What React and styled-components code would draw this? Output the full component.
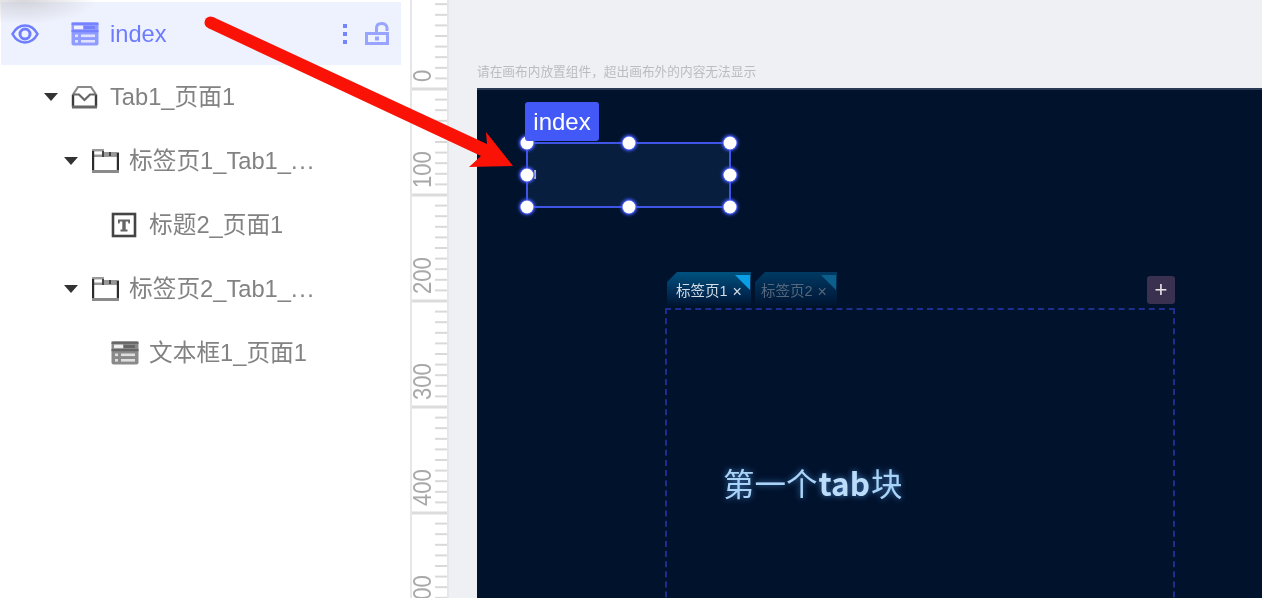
import React from 'react';
import styled, { createGlobalStyle } from 'styled-components';

const Global = createGlobalStyle`
  html, body { margin: 0; padding: 0; height: 100%; overflow: hidden; background: #fff; }
  #root { height: 100%; }
`;

const Page = styled.div`
  position: relative;
  display: flex;
  width: 1262px;
  height: 598px;
  overflow: hidden;
  filter: blur(0.5px);
  font-family: "Liberation Sans", "Noto Sans CJK SC", sans-serif;
`;

const Sidebar = styled.aside`
  position: relative;
  flex: 0 0 410px;
  box-sizing: border-box;
  padding-top: 2px;
  background: #fff;
  &::before {
    content: "";
    position: absolute;
    z-index: 1;
    left: 0; top: 0;
    width: 95px; height: 24px;
    background: radial-gradient(ellipse at 25% 0%, rgba(190,190,195,.6) 0%, rgba(230,230,235,0) 72%);
  }
`;

const Row = styled.div`
  position: relative;
  display: flex;
  align-items: center;
  box-sizing: border-box;
  height: ${p => (p.$active ? 63 : 64)}px;
  width: 400px;
  margin-left: 1px;
  padding-left: ${p => (p.$active ? 10 : 43 + p.$depth * 20)}px;
  background: ${p => (p.$active ? '#eef2fe' : 'transparent')};
  color: ${p => (p.$active ? '#6d7bff' : '#828282')};
  font-size: 23.7px;
`;

const CaretSlot = styled.span`
  flex: 0 0 27px;
  display: flex;
  align-items: center;
`;

const Caret = styled.i`
  width: 0; height: 0;
  border-left: 7px solid transparent;
  border-right: 7px solid transparent;
  border-top: 8px solid #333;
`;

const IconSlot = styled.span`
  flex: 0 0 ${p => p.$w || 28}px;
  display: flex;
  align-items: center;
  margin-right: ${p => p.$gap ?? 11}px;
`;

const RowLabel = styled.span`
  white-space: nowrap;
  line-height: 28px;
`;

const Ellipsis = styled.span`
  letter-spacing: 1.6px;
`;

const Actions = styled.div`
  margin-left: auto;
  display: flex;
  align-items: center;
  gap: 17px;
  padding-right: 12px;
`;

const Ruler = styled.svg`
  flex: 0 0 39px;
  display: block;
  background: #fff;
  border-left: 2px solid #e6e6e8;
  border-right: 2px solid #e6e6e8;
  box-sizing: border-box;
`;

const Workspace = styled.main`
  flex: 1;
  box-sizing: border-box;
  padding: 64px 0 0 28px;
  background: #eff0f4;
  overflow: hidden;
`;

const Hint = styled.div`
  height: 24px;
  line-height: 16px;
  font-size: 12.7px;
  color: #bbbbc0;
  white-space: nowrap;
`;

const Canvas = styled.div`
  position: relative;
  height: 510px;
  width: 800px;
  background: #00122c;
  border-top: 2px solid #2a3a55;
  box-sizing: border-box;
`;

const Selection = styled.div`
  position: absolute;
  left: 49px;
  top: 52px;
  width: 205px;
  height: 66px;
  box-sizing: border-box;
  background: #071e3e;
  border: 2px solid #3f55e6;
`;

const CursorMark = styled.i`
  position: absolute;
  left: 6px;
  top: 26px;
  width: 2px;
  height: 9px;
  background: #c8cfa8;
`;

const HandleLayer = styled.div`
  position: absolute;
  inset: -1px;
`;

const Handle = styled.span`
  position: absolute;
  left: ${p => p.$x}%;
  top: ${p => p.$y}%;
  width: 13px;
  height: 13px;
  border-radius: 50%;
  background: #fff;
  box-shadow: 0 0 0 1px #3f55e6, 0 0 3px 2px rgba(70, 90, 255, .75);
  transform: translate(-50%, -50%);
`;

const NameTag = styled.div`
  position: absolute;
  left: 48px;
  top: 12px;
  z-index: 2;
  width: 74px;
  height: 39px;
  border-radius: 3px;
  background: #4359f7;
  color: #fff;
  font-size: 24px;
  line-height: 39px;
  text-align: center;
`;

const TabGroup = styled.div`
  position: absolute;
  left: 188px;
  top: 182px;
  width: 510px;
`;

const TabBar = styled.div`
  display: flex;
  align-items: flex-start;
  gap: 4px;
  height: 36px;
  padding-left: 2px;
`;

const Tab = styled.div`
  position: relative;
  display: flex;
  align-items: flex-end;
  gap: 5px;
  box-sizing: border-box;
  width: ${p => (p.$active ? 84 : 82)}px;
  height: 34px;
  padding: 0 0 6px ${p => (p.$active ? 9 : 6)}px;
  clip-path: polygon(10px 0, 100% 0, 100% 100%, 0 100%, 0 10px);
  background: ${p => (p.$active
    ? 'linear-gradient(180deg, #00527f 0%, #00264f 70%, #00142f 100%)'
    : 'linear-gradient(180deg, #003a62 0%, #001f42 70%, #00142f 100%)')};
  color: ${p => (p.$active ? '#d5dde4' : '#56677c')};
  font-size: 14.5px;
  line-height: 17px;
  white-space: nowrap;
  &::after {
    content: "";
    position: absolute;
    right: 1px; top: 3px;
    border-left: 15px solid transparent;
    border-top: 15px solid ${p => (p.$active ? '#0a9fe6' : '#0a5f8c')};
  }
`;

const TabClose = styled.span`
  font-size: 16px;
`;

const AddButton = styled.div`
  margin: 4px 0 0 auto;
  width: 28px;
  height: 28px;
  border-radius: 3px;
  background: #3a3150;
  color: #e4e4e4;
  font-size: 22px;
  line-height: 27px;
  text-align: center;
`;

const Panel = styled.div`
  height: 320px;
  box-sizing: border-box;
  border: 2px dashed #1e2e8e;
  padding: 148px 0 0 56px;
`;

const PanelText = styled.div`
  color: #a9d3f7;
  font-family: "Noto Sans CJK SC", sans-serif;
  font-size: 31.5px;
  line-height: 48px;
  white-space: nowrap;
  text-shadow: 0 0 6px rgba(90, 160, 240, .7);
`;

const BoldWord = styled.span`
  font-weight: 700;
  margin: 0 1px;
  color: #bcdcfa;
`;

const ArrowOverlay = styled.svg`
  position: absolute;
  left: 0;
  top: 0;
  z-index: 5;
  pointer-events: none;
`;

const Eye = () => (
  <svg width="28" height="22" viewBox="0 0 28 22" fill="none" stroke="#6f7eff" strokeWidth="2.6">
    <path d="M1.5 11C5 4.5 9 2.5 14 2.5S23 4.5 26.5 11C23 17.5 19 19.5 14 19.5S5 17.5 1.5 11Z" />
    <circle cx="14" cy="11" r="5" strokeWidth="3" />
  </svg>
);

const InputIcon = ({ c, d }) => (
  <svg width="28" height="24" viewBox="0 0 28 24">
    <rect x="0.5" y="0.5" width="27" height="23" rx="2" fill={c} />
    <rect x="0.5" y="0.5" width="27" height="2.4" fill={d} />
    <rect x="3" y="3.6" width="9" height="3.6" fill="#fff" fillOpacity="0.85" />
    <rect x="13" y="4" width="11" height="3" fill={d} />
    <rect x="0.5" y="8" width="27" height="2.2" fill={d} />
    <g fill="#fff" fillOpacity="0.72">
      <rect x="4" y="12.5" width="3" height="2.6" />
      <rect x="10" y="12.5" width="14" height="2.6" />
      <rect x="4" y="18" width="3" height="2.6" />
      <rect x="10" y="18" width="14" height="2.6" />
    </g>
  </svg>
);

const InboxIcon = () => (
  <svg width="27" height="24" viewBox="0 0 27 24" fill="none">
    <path d="M2 9.5 7 2H20L25 9.5" stroke="#8a8a8a" strokeWidth="2.2" />
    <path d="M2 9.5V22M25 9.5V22" stroke="#3c3c3c" strokeWidth="2.4" />
    <path d="M2 9.5H8L13.5 15L19 9.5H25" stroke="#666" strokeWidth="2.2" />
    <rect x="1" y="20.5" width="25" height="3" fill="#666" />
  </svg>
);

const TabIcon = () => (
  <svg width="28" height="24" viewBox="0 0 28 24">
    <rect x="1" y="0" width="12" height="2.4" fill="#9a9a9a" />
    <rect x="1" y="3" width="27" height="5" fill="#999" />
    <rect x="3" y="3" width="8" height="2.5" fill="#fff" />
    <rect x="1" y="2" width="2.2" height="20" fill="#2c2c2c" />
    <rect x="25.8" y="4" width="2.2" height="18" fill="#2c2c2c" />
    <rect x="11" y="2" width="2" height="6" fill="#444" />
    <rect x="18" y="3" width="2" height="4" fill="#444" />
    <rect x="1" y="21" width="27" height="3" fill="#8a8a8a" />
  </svg>
);

const TitleIcon = () => (
  <svg width="26" height="26" viewBox="0 0 26 26">
    <rect x="2" y="2" width="22" height="22" fill="none" stroke="#444" strokeWidth="2.6" />
    <path d="M7 7.5H19V11.5H17.5L17 9.5H14.7V17.5H16.5V19.5H9.5V17.5H11.3V9.5H9L8.5 11.5H7Z" fill="#666" />
  </svg>
);

const Dots = () => (
  <svg width="6" height="22" viewBox="0 0 6 22" fill="#7484ff">
    <rect x="1" y="1" width="4" height="4" />
    <rect x="1" y="9" width="4" height="4" />
    <rect x="1" y="17" width="4" height="4" />
  </svg>
);

const OpenLock = () => (
  <svg width="24" height="24" viewBox="0 0 24 24">
    <path d="M11.5 11V6C11.5 3 13.5 1.5 16.5 1.5S22 3 22 6V9" fill="none" stroke="#98a4ff" strokeWidth="3" />
    <path fillRule="evenodd" fill="#98a4ff" d="M0 10H24V23H0ZM3 13V20H21V13Z" />
    <rect x="10" y="14.5" width="4" height="4" fill="#98a4ff" />
  </svg>
);

const RulerMarks = () => {
  const origin = 89;
  const unit = 10.6;
  const minor = [];
  for (let i = -8; i < 49; i++) {
    if (i % 10 !== 0) minor.push(origin + i * unit);
  }
  const major = [0, 1, 2, 3, 4, 5];
  return (
    <Ruler width="39" height="598" viewBox="0 0 35 598" preserveAspectRatio="none">
      {minor.map(y => <rect key={y} x="23" y={y - 1} width="12" height="2" fill="#d9d9d9" />)}
      {major.map(m => (
        <rect key={m} x="0" y={origin + m * 106 - 1.5} width="35" height="3" fill="#dcdcdc" />
      ))}
      {major.map(m => {
        const y = origin + m * 106 - 7;
        return (
          <text
            key={m}
            transform={`translate(19 ${y}) rotate(-90) scale(0.88 1)`}
            fontFamily="Liberation Sans, sans-serif"
            fontSize="25"
            fill="#a8a8a8"
          >
            {m === 0 ? '0' : `${m}00`}
          </text>
        );
      })}
    </Ruler>
  );
};

const handles = [
  [0, 0], [50, 0], [100, 0],
  [0, 50], [100, 50],
  [0, 100], [50, 100], [100, 100],
];

const hintText = '请在画布内放置组件\uFF0C超出画布外的内容无法显示';

export default function App() {
  return (
    <Page>
      <Global />
      <Sidebar>
        <Row $active>
          <IconSlot $w={28} $gap={32}><Eye /></IconSlot>
          <IconSlot $gap={11}><InputIcon c="#8f9bff" d="#7482ff" /></IconSlot>
          <RowLabel>index</RowLabel>
          <Actions><Dots /><OpenLock /></Actions>
        </Row>
        <Row $depth={0}>
          <CaretSlot><Caret /></CaretSlot>
          <IconSlot><InboxIcon /></IconSlot>
          <RowLabel>Tab1_页面1</RowLabel>
        </Row>
        <Row $depth={1}>
          <CaretSlot><Caret /></CaretSlot>
          <IconSlot $gap={10}><TabIcon /></IconSlot>
          <RowLabel>标签页1_Tab1_<Ellipsis>...</Ellipsis></RowLabel>
        </Row>
        <Row $depth={2}>
          <CaretSlot />
          <IconSlot $gap={10}><TitleIcon /></IconSlot>
          <RowLabel>标题2_页面1</RowLabel>
        </Row>
        <Row $depth={1}>
          <CaretSlot><Caret /></CaretSlot>
          <IconSlot $gap={10}><TabIcon /></IconSlot>
          <RowLabel>标签页2_Tab1_<Ellipsis>...</Ellipsis></RowLabel>
        </Row>
        <Row $depth={2}>
          <CaretSlot />
          <IconSlot $gap={10}><InputIcon c="#8a8a8a" d="#666" /></IconSlot>
          <RowLabel>文本框1_页面1</RowLabel>
        </Row>
      </Sidebar>
      <RulerMarks />
      <Workspace>
        <Hint>{hintText}</Hint>
        <Canvas>
          <NameTag>index</NameTag>
          <Selection>
            <CursorMark />
            <HandleLayer>
              {handles.map(([x, y]) => <Handle key={`${x}-${y}`} $x={x} $y={y} />)}
            </HandleLayer>
          </Selection>
          <TabGroup>
            <TabBar>
              <Tab $active>标签页1<TabClose>×</TabClose></Tab>
              <Tab>标签页2<TabClose>×</TabClose></Tab>
              <AddButton>+</AddButton>
            </TabBar>
            <Panel>
              <PanelText>第一个<BoldWord>tab</BoldWord>块</PanelText>
            </Panel>
          </TabGroup>
        </Canvas>
      </Workspace>
      <ArrowOverlay width="1262" height="598" viewBox="0 0 1262 598">
        <circle cx="210.5" cy="22.5" r="6" fill="#fb1207" />
        <polygon points="213,17 487,144 486,132 513,166 469,167 481,156 208,28" fill="#fb1207" />
      </ArrowOverlay>
    </Page>
  );
}
